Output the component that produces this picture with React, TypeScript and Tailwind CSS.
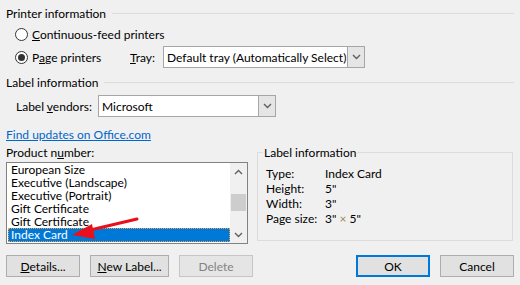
import React from "react";

const Chevron = ({ up = false, color = "#606060" }: { up?: boolean; color?: string }) => (
  <svg width="9" height="6" viewBox="0 0 9 6" className="block">
    <path
      d={up ? "M1 5 L4.5 1.5 L8 5" : "M1 1 L4.5 4.5 L8 1"}
      fill="none"
      stroke={color}
      strokeWidth="1.4"
    />
  </svg>
);

const Radio = ({ checked }: { checked?: boolean }) => (
  <div className="w-[13px] h-[13px] rounded-full border border-[#333] bg-white flex items-center justify-center shrink-0">
    {checked && <div className="w-[7px] h-[7px] rounded-full bg-[#333]" />}
  </div>
);

const Combo = ({ text, w }: { text: string; w: string }) => (
  <div className={`${w} h-[22px] border border-[#a6a6a6] bg-white flex items-stretch shrink-0`}>
    <div className="flex-1 pl-[3px] flex items-center whitespace-nowrap overflow-hidden">{text}</div>
    <div className="w-[17px] bg-[#e5e5e5] border-l border-[#a6a6a6] flex items-center justify-center">
      <Chevron />
    </div>
  </div>
);

const Header = ({ text }: { text: string }) => (
  <div className="flex items-center h-[15px]">
    <span className="whitespace-nowrap">{text}</span>
    <div className="flex-1 h-px bg-[#dcdcdc] ml-[6px]" />
  </div>
);

const Btn = ({ children, w, primary, disabled }: { children: React.ReactNode; w: string; primary?: boolean; disabled?: boolean }) => (
  <div
    className={`${w} h-[22px] flex items-center justify-center whitespace-nowrap ${
      primary ? "border-2 border-[#0078d7] bg-[#e1e1e1]" : disabled ? "border border-[#c6c6c6] bg-[#e5e5e5] text-[#838383]" : "border border-[#adadad] bg-[#e1e1e1]"
    }`}
  >
    {children}
  </div>
);

export default function App() {
  const items = [
    "European Size",
    "Executive (Landscape)",
    "Executive (Portrait)",
    "Gift Certificate",
    "Gift Certificate",
  ];
  return (
    <div
      className="w-[520px] h-[285px] bg-[#f0f0f0] text-black text-[12px] leading-[15px] overflow-hidden px-[6px] relative whitespace-nowrap"
      style={{ fontFamily: '"Segoe UI", Lato, "Noto Sans", sans-serif' }}
    >
      <div className="pt-[6px]">
        <Header text="Printer information" />
      </div>
      <div className="flex items-center h-[15px] mt-[6px] pl-[9px] gap-[4px]">
        <Radio />
        <span>
          <u>C</u>ontinuous-feed printers
        </span>
      </div>
      <div className="flex items-center h-[22px] mt-[4px] pl-[9px]">
        <Radio checked />
        <span className="ml-[4px] w-[98px]">
          P<u>a</u>ge printers
        </span>
        <span className="w-[33px]">
          <u>T</u>ray:
        </span>
        <Combo text="Default tray (Automatically Select)" w="w-[202px]" />
      </div>
      <div className="mt-[7px]">
        <Header text="Label information" />
      </div>
      <div className="flex items-center h-[22px] mt-[5px] pl-[10px]">
        <span className="w-[82px]">
          Label <u>v</u>endors:
        </span>
        <Combo text="Microsoft" w="w-[178px]" />
      </div>
      <div className="mt-[10px] h-[15px] text-[#0066cc] underline">Find updates on Office.com</div>
      <div className="mt-[3px] h-[15px]">
        Product n<u>u</u>mber:
      </div>
      <div className="flex mt-[-8px] items-start">
        <div className="mt-[10px] w-[242px] h-[82px] border border-[#828282] bg-white flex relative">
          <div className="flex-1 pl-[1px] leading-[13px]">
            {items.map((t, i) => (
              <div key={i} className="h-[13px] pl-[3px] overflow-hidden">
                {t}
              </div>
            ))}
            <div className="h-[14px] pl-[2px] bg-[#0078d7] text-white border border-dotted border-[#f0a040] leading-[12px]">
              Index Card
            </div>
          </div>
          <div className="w-[17px] bg-[#f0f0f0] flex flex-col items-center">
            <div className="h-[17px] flex items-center justify-center">
              <Chevron up color="#606060" />
            </div>
            <div className="h-[14px]" />
            <div className="w-[15px] h-[17px] bg-[#cdcdcd]" />
            <div className="flex-1" />
            <div className="h-[17px] flex items-center justify-center">
              <Chevron color="#606060" />
            </div>
          </div>
        </div>
        <div className="ml-[9px] w-[256px] h-[89px] border border-[#dcdcdc] relative">
          <div className="absolute left-[5px] top-[-8px] bg-[#f0f0f0] px-[1px]">Label information</div>
          <div className="pt-[13px] pl-[8px] leading-[15px]">
            {[
              ["Type:", "Index Card"],
              ["Height:", "5\""],
              ["Width:", "3\""],
              ["Page size:", "3\" \u00d7 5\""],
            ].map(([a, b]) => (
              <div key={a} className="flex h-[15px]">
                <span className="w-[59px]">{a}</span>
                <span>
                  {a === "Page size:" ? (
                    <>
                      3" <span className="text-[#9a8a50]">×</span> 5"
                    </>
                  ) : (
                    b
                  )}
                </span>
              </div>
            ))}
          </div>
        </div>
      </div>
      <div className="flex mt-[11px] items-center">
        <Btn w="w-[74px]">
          <u>D</u>etails...
        </Btn>
        <div className="w-[10px]" />
        <Btn w="w-[79px]">
          <u>N</u>ew Label...
        </Btn>
        <div className="w-[10px]" />
        <Btn w="w-[74px]" disabled>
          Delete
        </Btn>
        <div className="flex-1" />
        <Btn w="w-[74px]" primary>
          OK
        </Btn>
        <div className="w-[10px]" />
        <Btn w="w-[74px]">Cancel</Btn>
      </div>
      <svg className="absolute left-0 top-0 pointer-events-none" width="520" height="285">
        <line x1="137" y1="219" x2="86" y2="231" stroke="#e8101a" strokeWidth="3" strokeLinecap="round" />
        <polygon points="72,235 92,224 95,239" fill="#e8101a" />
      </svg>
    </div>
  );
}
